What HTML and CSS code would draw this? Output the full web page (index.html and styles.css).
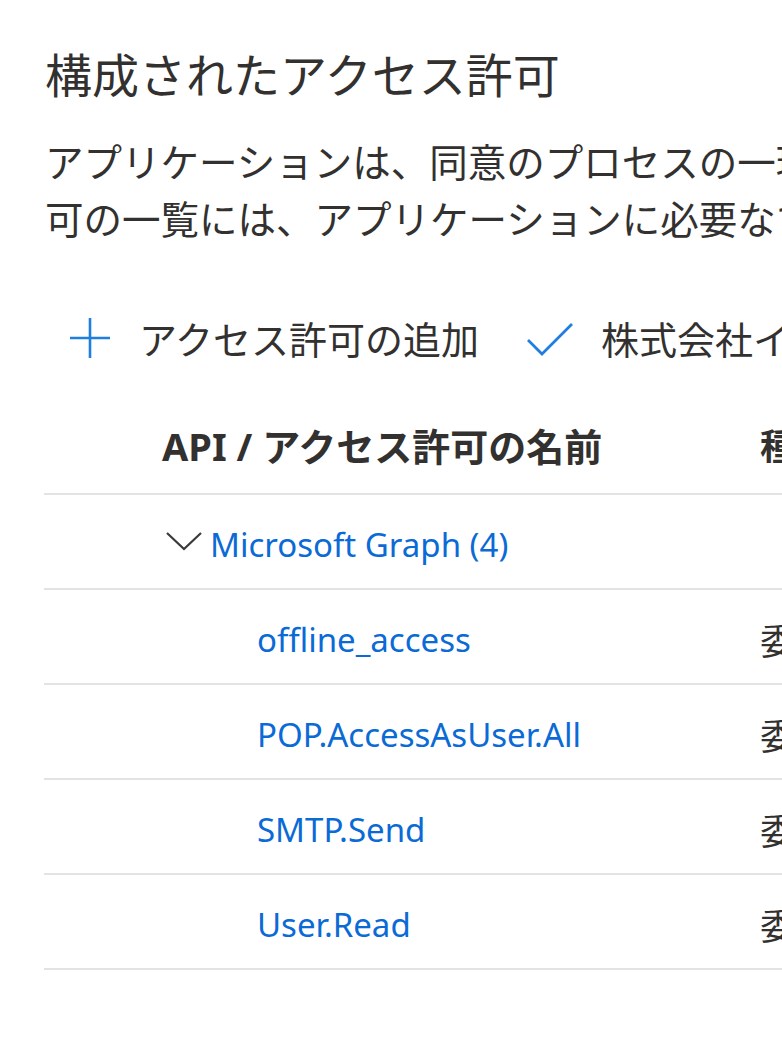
FILE: index.html
```html
<!DOCTYPE html>
<html lang="ja">
<head>
<meta charset="utf-8">
<title>構成されたアクセス許可</title>
<link rel="stylesheet" href="styles.css">
</head>
<body>
<div class="page">
  <h1 class="title">構成されたアクセス許可</h1>
  <p class="desc">アプリケーションは、同意のプロセスの一環としてユーザーまたは管理者によって許可された場合に API を呼び出す権限が与えられます。構成されたアクセス許<br>可の一覧には、アプリケーションに必要なすべてのアクセス許可が含まれている必要があります。</p>

  <div class="toolbar">
    <button class="tool">
      <svg class="ico" viewBox="0 0 44 44" width="44" height="44"><path d="M22 2 V42 M2 22 H42" stroke="#1f7fe0" stroke-width="2.6" fill="none"/></svg>
      <span>アクセス許可の追加</span>
    </button>
    <button class="tool">
      <svg class="ico" viewBox="0 0 48 44" width="48" height="44"><path d="M2 24 L16 38 L46 8" stroke="#1f7fe0" stroke-width="2.8" fill="none"/></svg>
      <span>株式会社イ〇〇に管理者の同意を与えます</span>
    </button>
  </div>

  <div class="table">
    <div class="row head">
      <div class="c1">API / アクセス許可の名前</div>
      <div class="c2">種類</div>
    </div>
    <div class="row group">
      <div class="c1">
        <svg class="chev" viewBox="0 0 36 20" width="36" height="20"><path d="M1 2 L18 18 L35 2" stroke="#3b3a39" stroke-width="2.2" fill="none"/></svg>
        <a class="link">Microsoft Graph (4)</a>
      </div>
      <div class="c2"></div>
    </div>
    <div class="row item">
      <div class="c1"><a class="link">offline_access</a></div>
      <div class="c2">委任済み</div>
    </div>
    <div class="row item">
      <div class="c1"><a class="link">POP.AccessAsUser.All</a></div>
      <div class="c2">委任済み</div>
    </div>
    <div class="row item">
      <div class="c1"><a class="link">SMTP.Send</a></div>
      <div class="c2">委任済み</div>
    </div>
    <div class="row item">
      <div class="c1"><a class="link">User.Read</a></div>
      <div class="c2">委任済み</div>
    </div>
  </div>
</div>
</body>
</html>
```

FILE: styles.css
```css
html, body {
  margin: 0;
  padding: 0;
  background: #ffffff;
  overflow: hidden;
}

body {
  font-family: "Noto Sans", "Noto Sans CJK JP", sans-serif;
  color: #323130;
}

.page {
  width: 1600px;
  padding-left: 45px;
  white-space: nowrap;
}

.title {
  margin: 43px 0 0;
  font-size: 47px;
  line-height: 60px;
  font-weight: 400;
  font-family: "Noto Sans CJK JP", sans-serif;
  color: #323130;
}

.desc {
  margin: 29px 0 0;
  font-size: 38.5px;
  line-height: 57px;
  font-family: "Noto Sans CJK JP", sans-serif;
  color: #323130;
}

.toolbar {
  display: flex;
  align-items: center;
  margin-top: 62px;
  height: 60px;
  padding-left: 23px;
}

.tool {
  display: flex;
  align-items: center;
  background: none;
  border: 0;
  padding: 0;
  font: inherit;
  font-family: "Noto Sans CJK JP", sans-serif;
  font-size: 38px;
  color: #323130;
  line-height: 60px;
}

.tool .ico {
  flex: none;
  margin-right: 27px;
}

.tool + .tool {
  margin-left: 47px;
}

.table {
  margin-top: 27px;
  margin-left: -1px;
  width: 1400px;
}

.row {
  display: grid;
  grid-template-columns: 716px 1fr;
  align-items: center;
  border-bottom: 2px solid #e4e3e2;
}

.row.head {
  height: 98px;
  font-weight: 700;
  font-size: 38px;
  font-family: "Noto Sans", "Noto Sans CJK JP", sans-serif;
}

.row.head .c1 {
  padding-left: 118px;
}

.row.group,
.row.item {
  padding-top: 5px;
  box-sizing: border-box;
  height: 95px;
}

.row.group .c1 {
  display: flex;
  align-items: center;
  padding-left: 122px;
}

.chev {
  flex: none;
  margin-right: 8px;
  margin-top: -6px;
}

.row.item .c1 {
  padding-left: 213px;
}

.c2 {
  font-size: 36px;
  font-family: "Noto Sans CJK JP", sans-serif;
}

.row.head .c2 {
  font-weight: 700;
}

.link {
  color: #0a6ad6;
  font-size: 33px;
  font-family: "Noto Sans", sans-serif;
  text-decoration: none;
}
```
